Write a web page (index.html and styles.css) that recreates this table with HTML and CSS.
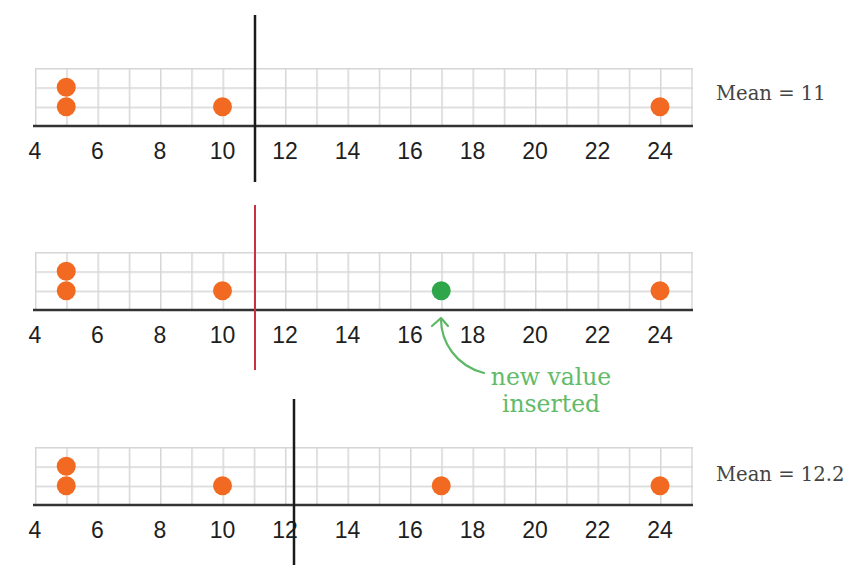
FILE: index.html
```html
<!DOCTYPE html>
<html lang="en">
<head>
<meta charset="utf-8">
<title>Mean with inserted value</title>
<link rel="stylesheet" href="styles.css">
</head>
<body>
<main class="figure">
  <section class="panel panel-top">
    <svg class="chart" width="700" height="184" viewBox="0 0 700 184">
      <defs>
        <pattern id="grid1" x="35" y="68" width="31.25" height="19.33" patternUnits="userSpaceOnUse">
          <rect class="gl" x="0" y="0" width="1.5" height="19.33"/>
          <rect class="gl" x="0" y="0" width="31.25" height="1.5"/>
        </pattern>
      </defs>
      <rect x="35" y="68" width="658" height="58" fill="url(#grid1)"/>
      <line class="axis" x1="33" y1="126" x2="693" y2="126"/>
      <circle class="dot" cx="66.25" cy="87.3" r="9.5"/>
      <circle class="dot" cx="66.25" cy="106.7" r="9.5"/>
      <circle class="dot" cx="222.5" cy="106.7" r="9.5"/>
      <circle class="dot" cx="660" cy="106.7" r="9.5"/>
      <g class="ticks">
        <text x="35" y="159">4</text><text x="97.5" y="159">6</text><text x="160" y="159">8</text>
        <text x="222.5" y="159">10</text><text x="285" y="159">12</text><text x="347.5" y="159">14</text>
        <text x="410" y="159">16</text><text x="472.5" y="159">18</text><text x="535" y="159">20</text>
        <text x="597.5" y="159">22</text><text x="660" y="159">24</text>
      </g>
      <line class="mean" x1="255" y1="15" x2="255" y2="182"/>
    </svg>
    <p class="mean-label label-top">Mean = 11</p>
  </section>

  <section class="panel panel-mid">
    <svg class="chart" width="700" height="195" viewBox="0 0 700 195">
      <defs>
        <pattern id="grid2" x="35" y="68" width="31.25" height="19.33" patternUnits="userSpaceOnUse">
          <rect class="gl" x="0" y="0" width="1.5" height="19.33"/>
          <rect class="gl" x="0" y="0" width="31.25" height="1.5"/>
        </pattern>
      </defs>
      <rect x="35" y="68" width="658" height="58" fill="url(#grid2)"/>
      <line class="axis" x1="33" y1="126" x2="693" y2="126"/>
      <circle class="dot" cx="66.25" cy="87.3" r="9.5"/>
      <circle class="dot" cx="66.25" cy="106.7" r="9.5"/>
      <circle class="dot" cx="222.5" cy="106.7" r="9.5"/>
      <circle class="dot dot-new" cx="441.25" cy="106.7" r="9.5"/>
      <circle class="dot" cx="660" cy="106.7" r="9.5"/>
      <g class="ticks">
        <text x="35" y="159">4</text><text x="97.5" y="159">6</text><text x="160" y="159">8</text>
        <text x="222.5" y="159">10</text><text x="285" y="159">12</text><text x="347.5" y="159">14</text>
        <text x="410" y="159">16</text><text x="472.5" y="159">18</text><text x="535" y="159">20</text>
        <text x="597.5" y="159">22</text><text x="660" y="159">24</text>
      </g>
      <line class="mean mean-old" x1="255" y1="21" x2="255" y2="186"/>
      <path class="arrow" d="M441,135 C441,158 456,182 484,189"/>
      <path class="arrow" d="M432,142 L441,134 L448,142"/>
      <g class="note">
        <text x="551" y="201">new value</text>
        <text x="551" y="228">inserted</text>
      </g>
    </svg>
  </section>

  <section class="panel panel-bottom">
    <svg class="chart" width="700" height="186" viewBox="0 0 700 186">
      <defs>
        <pattern id="grid3" x="35" y="68" width="31.25" height="19.33" patternUnits="userSpaceOnUse">
          <rect class="gl" x="0" y="0" width="1.5" height="19.33"/>
          <rect class="gl" x="0" y="0" width="31.25" height="1.5"/>
        </pattern>
      </defs>
      <rect x="35" y="68" width="658" height="58" fill="url(#grid3)"/>
      <line class="axis" x1="33" y1="126" x2="693" y2="126"/>
      <circle class="dot" cx="66.25" cy="87.3" r="9.5"/>
      <circle class="dot" cx="66.25" cy="106.7" r="9.5"/>
      <circle class="dot" cx="222.5" cy="106.7" r="9.5"/>
      <circle class="dot" cx="441.25" cy="106.7" r="9.5"/>
      <circle class="dot" cx="660" cy="106.7" r="9.5"/>
      <g class="ticks">
        <text x="35" y="159">4</text><text x="97.5" y="159">6</text><text x="160" y="159">8</text>
        <text x="222.5" y="159">10</text><text x="285" y="159">12</text><text x="347.5" y="159">14</text>
        <text x="410" y="159">16</text><text x="472.5" y="159">18</text><text x="535" y="159">20</text>
        <text x="597.5" y="159">22</text><text x="660" y="159">24</text>
      </g>
      <line class="mean" x1="294" y1="20" x2="294" y2="186"/>
    </svg>
    <p class="mean-label label-bottom">Mean = 12.2</p>
  </section>
</main>
</body>
</html>
```

FILE: styles.css
```css
html, body {
  margin: 0;
  padding: 0;
  background: #ffffff;
}

body {
  width: 852px;
  height: 565px;
  overflow: hidden;
  font-family: "Liberation Sans", Arial, sans-serif;
}

.figure {
  display: flex;
  flex-direction: column;
}

.panel {
  display: flex;
  align-items: flex-start;
}

.panel-top { height: 184px; }
.panel-mid { height: 195px; }
.panel-bottom { height: 186px; }

.chart {
  display: block;
  flex: 0 0 auto;
  overflow: visible;
}

.gl {
  fill: #d6d6d6;
}

.axis {
  stroke: #333333;
  stroke-width: 2.5;
}

.dot {
  fill: #f26a21;
}

.dot-new {
  fill: #30a64a;
}

.ticks text {
  font-family: "Liberation Sans", Arial, sans-serif;
  font-size: 23px;
  fill: #1e1e1e;
  text-anchor: middle;
}

.mean {
  stroke: #1a1a1a;
  stroke-width: 2.5;
}

.mean-old {
  stroke: #c8323e;
  stroke-width: 2;
}

.arrow {
  fill: none;
  stroke: #5db865;
  stroke-width: 2.2;
  stroke-linecap: round;
  stroke-linejoin: round;
}

.note text {
  font-family: "DejaVu Serif", "Liberation Serif", serif;
  font-size: 23.5px;
  fill: #62bb69;
  text-anchor: middle;
}

.mean-label {
  margin: 0 0 0 16px;
  font-family: "DejaVu Serif", "Liberation Serif", serif;
  font-size: 19.6px;
  line-height: 24px;
  color: #444444;
  white-space: nowrap;
}

.label-top { margin-top: 82px; }
.label-bottom { margin-top: 84px; }
```
